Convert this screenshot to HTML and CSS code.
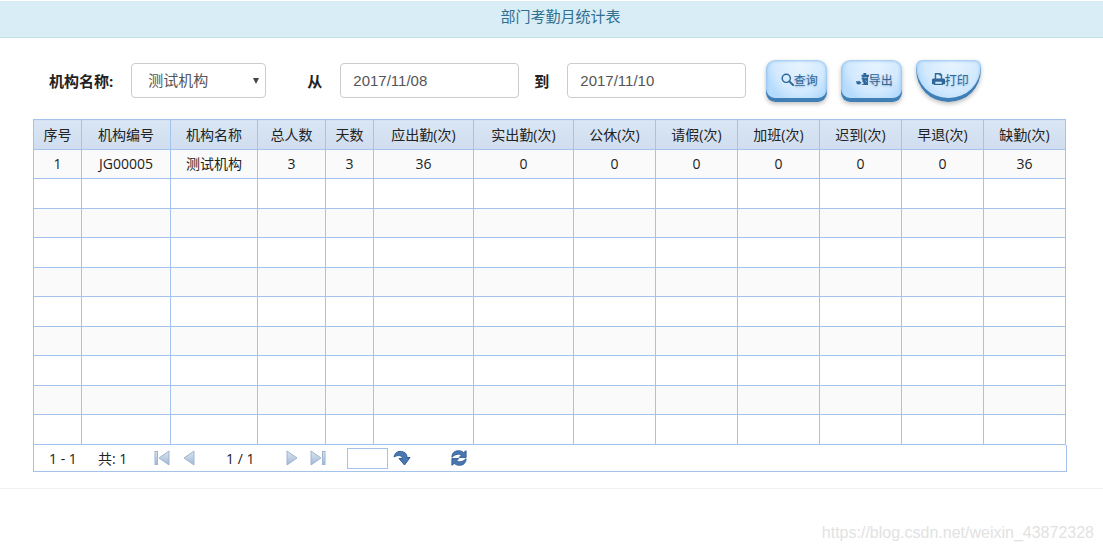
FILE: index.html
```html
<!DOCTYPE html>
<html lang="zh-CN">
<head>
<meta charset="utf-8">
<meta name="viewport" content="width=device-width, initial-scale=1">
<title>部门考勤月统计表</title>
<link rel="stylesheet" href="styles.css">
</head>
<body>
<header class="panel-heading"><h1 class="panel-title">部门考勤月统计表</h1></header>
<main class="panel-body">
  <form class="filters">
    <label class="field-label" for="org">机构名称:</label>
    <div class="select-wrap">
      <select class="control org-select" id="org"><option>测试机构</option></select>
      <span class="arrow"></span>
    </div>
    <label class="field-label label-from" for="from">从</label>
    <input class="control date-input" id="from" type="text" value="2017/11/08">
    <label class="field-label label-to" for="to">到</label>
    <input class="control date-input" id="to" type="text" value="2017/11/10">
    <div class="actions">
      <button class="btn" type="button"><svg class="icon" viewBox="0 0 14 14"><circle cx="5.7" cy="5.7" r="4.4" fill="none" stroke="currentColor" stroke-width="1.6"/><path d="M9 9l4 4" stroke="currentColor" stroke-width="2.2" stroke-linecap="round"/></svg>查询</button>
      <button class="btn" type="button"><svg class="icon" viewBox="0 0 14 14"><path fill="currentColor" d="M8 0h3v2h3v2h-1v9H6v-1h2v-2H7V7H6V5h1V4H6V2h2zM0 9h3V8l3 2.500L3 13v-1H1z"/><path d="M8 5h4M10 8l2 2" stroke="#b9dcf9" stroke-width=".8"/></svg>导出</button>
      <button class="btn btn-round" type="button"><svg class="icon" viewBox="0 0 14 14"><path fill="currentColor" fill-rule="evenodd" d="M3 0h6l2 2v4h2l1 1v5h-2v1H2v-1H0V7l1-1h2zM4.500 1.500V6h5V3H8V1.500zM3.500 9.500v2h7v-2z"/></svg>打印</button>
    </div>
  </form>
  <table class="grid">
    <colgroup><col class="c-no"><col class="c-code"><col class="c-name"><col class="c-people"><col class="c-no"><col class="c-wide"><col class="c-wide"><col class="c-count"><col class="c-count"><col class="c-count"><col class="c-count"><col class="c-count"><col class="c-count"></colgroup>
    <thead><tr><th>序号</th><th>机构编号</th><th>机构名称</th><th>总人数</th><th>天数</th><th>应出勤(次)</th><th>实出勤(次)</th><th>公休(次)</th><th>请假(次)</th><th>加班(次)</th><th>迟到(次)</th><th>早退(次)</th><th>缺勤(次)</th></tr></thead>
    <tbody>
      <tr><td>1</td><td>JG00005</td><td>测试机构</td><td>3</td><td>3</td><td>36</td><td>0</td><td>0</td><td>0</td><td>0</td><td>0</td><td>0</td><td>36</td></tr>
      <tr><td></td><td></td><td></td><td></td><td></td><td></td><td></td><td></td><td></td><td></td><td></td><td></td><td></td></tr>
      <tr><td></td><td></td><td></td><td></td><td></td><td></td><td></td><td></td><td></td><td></td><td></td><td></td><td></td></tr>
      <tr><td></td><td></td><td></td><td></td><td></td><td></td><td></td><td></td><td></td><td></td><td></td><td></td><td></td></tr>
      <tr><td></td><td></td><td></td><td></td><td></td><td></td><td></td><td></td><td></td><td></td><td></td><td></td><td></td></tr>
      <tr><td></td><td></td><td></td><td></td><td></td><td></td><td></td><td></td><td></td><td></td><td></td><td></td><td></td></tr>
      <tr><td></td><td></td><td></td><td></td><td></td><td></td><td></td><td></td><td></td><td></td><td></td><td></td><td></td></tr>
      <tr><td></td><td></td><td></td><td></td><td></td><td></td><td></td><td></td><td></td><td></td><td></td><td></td><td></td></tr>
      <tr><td></td><td></td><td></td><td></td><td></td><td></td><td></td><td></td><td></td><td></td><td></td><td></td><td></td></tr>
      <tr><td></td><td></td><td></td><td></td><td></td><td></td><td></td><td></td><td></td><td></td><td></td><td></td><td></td></tr>
    </tbody>
  </table>
  <nav class="pager" aria-label="分页">
    <span class="range">1 - 1</span>
    <span class="total">共: 1</span>
    <button class="page-btn" type="button" aria-label="首页"><svg viewBox="0 0 16 16"><defs><linearGradient id="metal" x1="0" y1="0" x2="0" y2="1"><stop offset="0" stop-color="#dbe5f1"/><stop offset="1" stop-color="#a3b9d5"/></linearGradient></defs><rect class="metal" x="1" y="1.500" width="2.500" height="13"/><path class="metal" d="M15 1v14L5 8z"/></svg></button>
    <button class="page-btn prev" type="button" aria-label="上一页"><svg viewBox="0 0 16 16"><path class="metal" d="M13 1v14L3 8z"/></svg></button>
    <span class="page">1 / 1</span>
    <button class="page-btn" type="button" aria-label="下一页"><svg viewBox="0 0 16 16"><path class="metal" d="M3 1v14l10-7z"/></svg></button>
    <button class="page-btn last" type="button" aria-label="末页"><svg viewBox="0 0 16 16"><path class="metal" d="M1 1v14l10-7z"/><rect class="metal" x="12.500" y="1.500" width="2.500" height="13"/></svg></button>
    <input class="page-input" type="text" aria-label="页码">
    <button class="page-btn go" type="button" aria-label="跳转"><svg viewBox="0 0 18 16"><path class="steel" d="M1 7C2 2.500 5 1 8.500 1.500c3.500.5 5.500 2.500 5.500 6h3L11.500 15 6 8.500h3.500C9.300 5.500 5 4.500 1 7z"/></svg></button>
    <button class="page-btn reload" type="button" aria-label="刷新"><svg viewBox="0 0 18 18"><path class="steel" d="M1 8.200C1 3 4.500.8 8.500.8c2.400 0 4.500.8 5.600 2L17 .8v7.600H9.200l2.400-2.600C9 3.800 5 4.500 1 8.200zM17 9.800c0 5.200-3.500 7.400-7.500 7.400-2.400 0-4.500-.8-5.600-2L1 17.200V9.600h7.800l-2.400 2.600c2.600 2 6.600 1.300 10.600-2.400z"/></svg></button>
  </nav>
</main>
<footer class="footer">https://blog.csdn.net/weixin_43872328</footer>
</body>
</html>
```
FILE: styles.css
```css
* { box-sizing: border-box; }

body {
  margin: 0;
  background: #fff;
  color: #222;
  font-family: "Open Sans", "Noto Sans CJK SC", sans-serif;
  font-size: 14px;
}

button, input, select { font: inherit; color: inherit; }

.panel-heading {
  height: 38px;
  padding-top: 5px;
  background: #d9edf7;
  border-top: 1px solid #fff;
  border-bottom: 1px solid #c3e3ec;
  text-align: center;
}

.panel-title {
  margin: 0;
  padding-left: 18px;
  color: #31708f;
  font-size: 15px;
  font-weight: 400;
  line-height: 20px;
}

.panel-body {
  padding: 18px 38px 16px 33px;
  border-bottom: 1px solid #f2f2f2;
}

.filters {
  display: flex;
  align-items: center;
  height: 49px;
  margin-bottom: 14px;
  padding-left: 16px;
}

.field-label { font-size: 15px; font-weight: 700; line-height: 24px; }

.select-wrap { position: relative; width: 135px; margin-left: 18px; }

.control {
  display: block;
  height: 35px;
  padding: 0 12px;
  background: #fff;
  border: 1px solid #ccc;
  border-radius: 4px;
  color: #555;
  font-family: "Liberation Sans", "Noto Sans CJK SC", sans-serif;
  font-size: 15px;
}

.org-select { width: 100%; padding-left: 16px; appearance: none; }

.arrow {
  position: absolute;
  right: 7px;
  top: 15px;
  border: 3px solid transparent;
  border-top: 6px solid #444;
  border-bottom: 0;
  pointer-events: none;
}

.label-from { margin: 0 18px 0 41px; }
.label-to { margin: 0 18px 0 15px; }
.date-input { width: 179px; }

.actions { display: flex; gap: 14px; margin-left: 20px; }

.btn {
  display: flex;
  align-items: center;
  justify-content: center;
  width: 61px;
  height: 42px;
  padding: 0 0 2px 5px;
  border: 0;
  border-radius: 9px;
  background:
    radial-gradient(ellipse at 55% 0, rgba(240, 248, 255, .9) 0, rgba(222, 239, 255, .7) 55%, transparent 75%),
    #b5dbfd;
  box-shadow: inset 0 -4px 0 #3f7fb6, inset 0 0 3px 1px #92c2ee, 0 2px 4px rgba(0, 0, 0, .25);
  color: #2f6799;
  font-size: 12px;
  white-space: nowrap;
  text-shadow: 0 1px 2px rgba(50, 100, 150, .4);
}

.btn-round { padding-left: 3px; width: 65px; border-radius: 6px 6px 32px 32px; }
.icon { width: 13px; height: 13px; flex: none; }

.grid {
  width: 100%;
  border-collapse: collapse;
  table-layout: fixed;
}

.c-no { width: 48px; }
.c-code { width: 89px; }
.c-name { width: 87px; }
.c-people { width: 68px; }
.c-wide { width: 100px; }
.c-count { width: 82px; }

.grid th, .grid td {
  height: 30px;
  padding: 0;
  border: 1px solid #a3c2ec;
  font-weight: 400;
  line-height: 20px;
  text-align: center;
}

.grid th { background: linear-gradient(#dae6f4, #cfddef); }
.grid tbody tr:nth-child(odd) td { height: 29px; background: #fafafa; }

.pager {
  display: flex;
  align-items: center;
  height: 27px;
  margin-right: -2px;
  padding-left: 15px;
  border: 1px solid #a3c2ec;
  border-top: 0;
}

.range { width: 49px; }
.total { width: 56px; }
.page { width: 58px; margin-left: 29px; }

.page-btn {
  width: 16px;
  height: 18px;
  padding: 0;
  border: 0;
  background: none;
}

.page-btn svg { display: block; width: 100%; height: 16px; }
.metal { fill: url(#metal); stroke: #a0b5d0; stroke-width: 1; }
.steel { fill: #4a78b0; stroke: #2f5c96; stroke-width: 1; }
.prev { margin-left: 11px; }
.last { margin-left: 10px; }

.page-input {
  width: 41px;
  height: 21px;
  margin-left: 21px;
  padding: 0 3px;
  border: 1px solid #a3c2ec;
  background: #fff;
}

.go { width: 18px; margin-left: 5px; }
.reload { width: 18px; margin-left: 39px; }

.footer {
  padding: 32px 9px 0 0;
  color: #e2e2e2;
  font-family: "Liberation Sans", sans-serif;
  font-size: 16px;
  line-height: 24px;
  text-align: right;
}
```
